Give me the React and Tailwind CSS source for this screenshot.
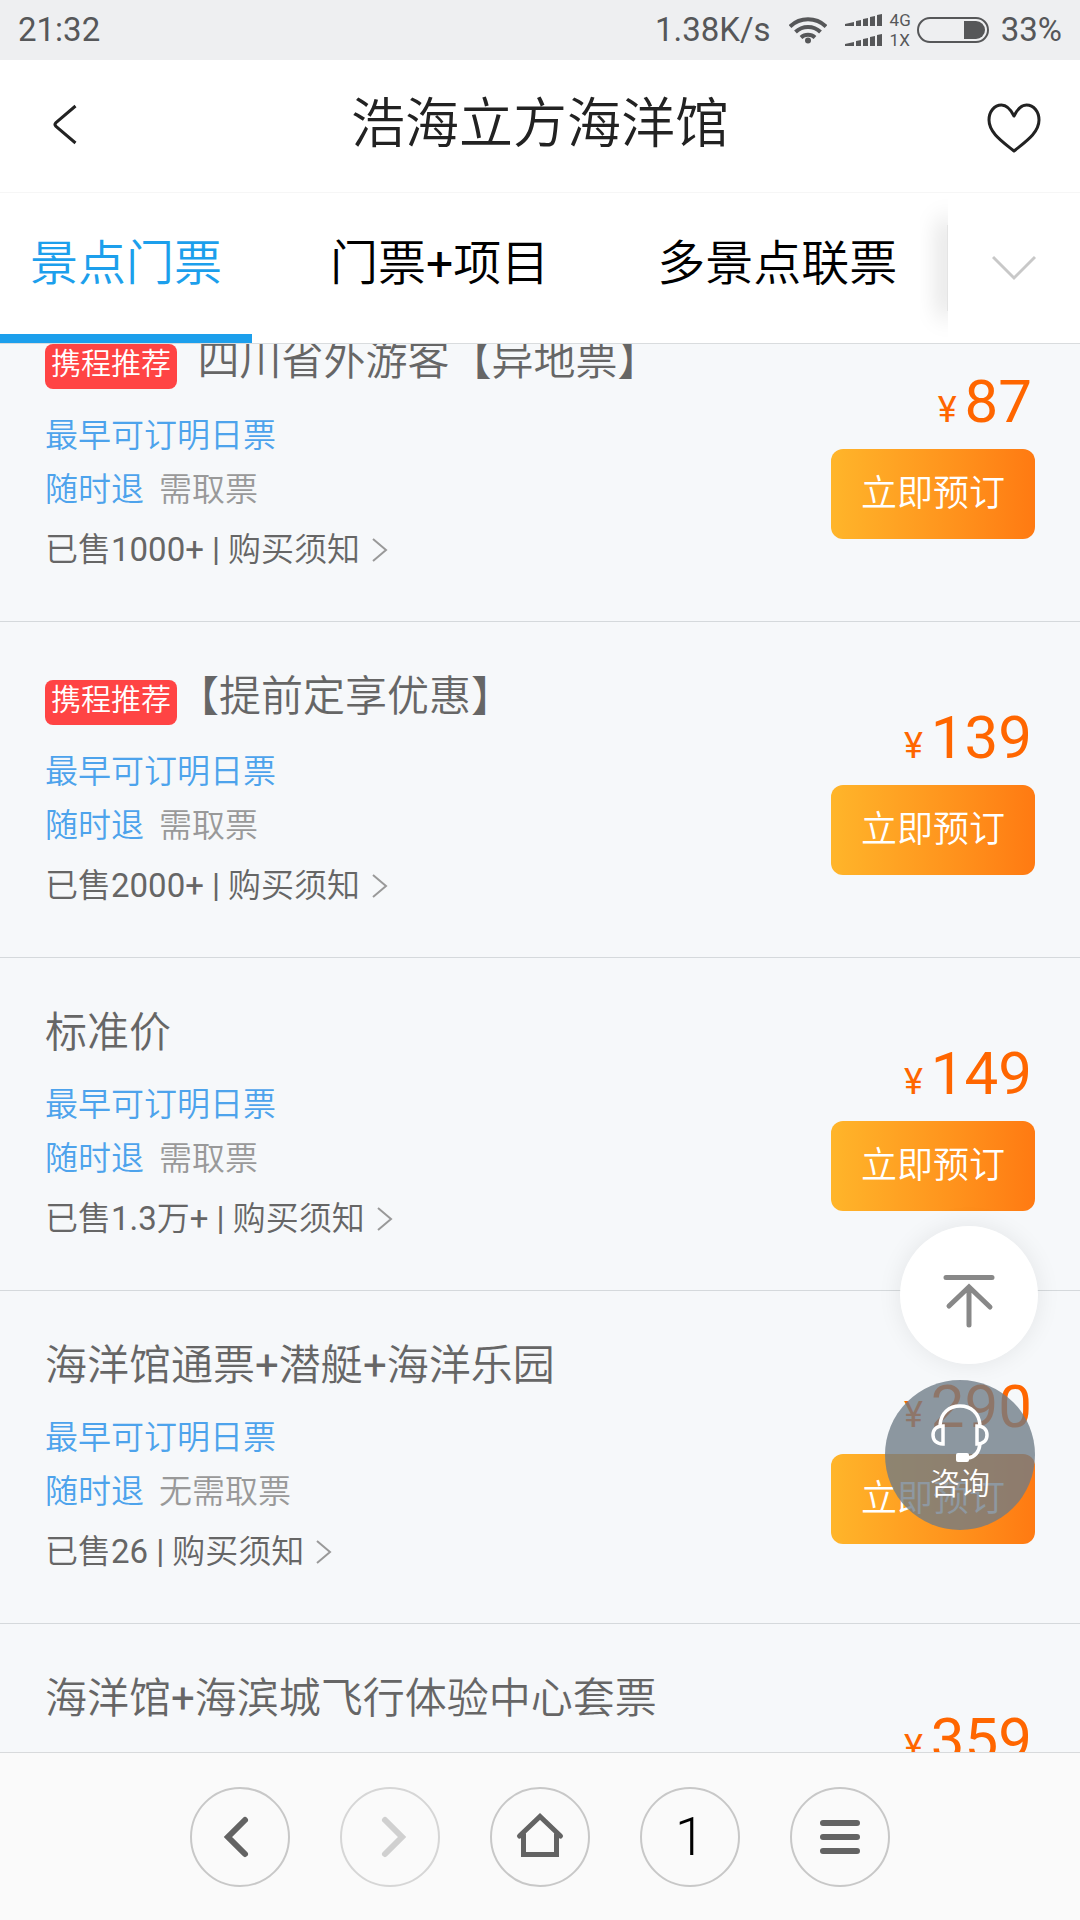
// src/App.jsx
import React, { useState } from 'react';

const tabs = ['景点门票', '门票+项目', '多景点联票'];

const tickets = [
  { id: 1, badge: '携程推荐', title: '\u00a0\u00a0四川省外游客【异地票】', pickup: '需取票', sold: '1000+', price: 87 },
  { id: 2, badge: '携程推荐', title: '【提前定享优惠】', pickup: '需取票', sold: '2000+', price: 139 },
  { id: 3, title: '标准价', pickup: '需取票', sold: '1.3万+', price: 149 },
  { id: 4, title: '海洋馆通票+潜艇+海洋乐园', pickup: '无需取票', sold: '26', price: 290 },
  { id: 5, title: '海洋馆+海滨城飞行体验中心套票', pickup: '需取票', sold: '100+', price: 359 },
];

// Latin signs and digits are drawn a step heavier than the Chinese text around them
const MixedText = ({ children }) =>
  children.split(/([\d.+|]+)/).map((part, i) =>
    i % 2 ? (
      <span key={i} className="font-normal">
        {part}
      </span>
    ) : (
      part
    )
  );

const SignalBars = () => (
  <svg width="37" height="12" viewBox="0 0 37 12" fill="currentColor">
    <path d="M0 12v-2l9-2v4zM11 12V7l5-1v6zM18 12V5l5-1v8zM25 12V3l5-1v10zM32 12V1l5-1v12z" />
  </svg>
);

const StatusBar = () => (
  <div className="flex h-[60px] flex-none items-center bg-[#eeeff1] pl-[18px] pr-[18px] text-[33px] text-[#565759]">
    <span className="mr-auto">21:32</span>
    <span className="mr-[18px]">1.38K/s</span>
    <svg className="mr-[18px]" width="38" height="28" viewBox="0 0 38 28" fill="none" stroke="currentColor" strokeWidth="4">
      <path d="M1 10.500a26 26 0 0 1 36 0" />
      <path d="M6.500 16a18 18 0 0 1 25 0" />
      <path d="M12 21.500a10.500 10.500 0 0 1 14 0" />
      <circle cx="19" cy="24.500" r="3" fill="currentColor" stroke="none" />
    </svg>
    <span className="mr-2 flex flex-col gap-2">
      <SignalBars />
      <SignalBars />
    </span>
    <span className="mr-[6px] flex flex-col text-[17px] leading-5">
      <span>4G</span>
      <span>1X</span>
    </span>
    <svg className="mr-3" width="72" height="26" viewBox="0 0 72 26">
      <rect x="1" y="1" width="70" height="24" rx="12" fill="none" stroke="currentColor" strokeWidth="2" />
      <path d="M47 4h12a9 9 0 0 1 0 18H47z" fill="currentColor" />
    </svg>
    <span>33%</span>
  </div>
);

const Header = () => (
  <header className="flex h-[132px] flex-none items-center justify-between bg-white pb-1 pl-[50px] pr-[39px] text-[#222]">
    <button type="button" aria-label="返回" className="w-[43px]">
      <svg width="28" height="42" viewBox="0 0 28 42" fill="none" stroke="currentColor" strokeWidth="3">
        <path d="M25.500 3L6 19.500Q4 21.500 6 23.500L25.500 40" />
      </svg>
    </button>
    <h1 className="text-[54px] font-[350]">浩海立方海洋馆</h1>
    <button type="button" aria-label="收藏" className="pt-2">
      <svg width="54" height="50" viewBox="0 0 54 50" fill="none" stroke="currentColor" strokeWidth="3" strokeLinejoin="round">
        <path d="M27 13C23 5 19 2 14.500 2C7 2 2 9 2 17C2 30 16 39 27 48C38 39 52 30 52 17C52 9 47 2 39.500 2C35 2 31 5 27 13Z" />
      </svg>
    </button>
  </header>
);

const TabBar = ({ active, onChange }) => (
  <div className="flex h-[152px] flex-none border-b border-t border-b-[#d9dcde] border-t-[#f6f6f6] bg-white">
    <div role="tablist" className="flex min-w-0 flex-1 gap-12 overflow-hidden whitespace-nowrap">
      {tabs.map((tab, i) => (
        <button
          key={tab}
          type="button"
          role="tab"
          aria-selected={i === active}
          onClick={() => onChange(i)}
          className={
            i === active
              ? 'border-b-[9px] border-[#1c9fec] px-[30px] text-[48px] font-[350] text-[#1c9fec]'
              : 'border-b-[9px] border-transparent px-[30px] text-[48px] font-[350] text-black'
          }
        >
          <MixedText>{tab}</MixedText>
        </button>
      ))}
    </div>
    {/* Shadow at the edge of the scrolling tabs */}
    <div className="flex w-7 flex-none justify-end overflow-hidden py-8">
      <div className="w-px bg-[#e4e4e4] shadow-[0_0_24px_6px_rgba(0,0,0,0.18)]" />
    </div>
    <button type="button" aria-label="展开" className="flex w-[132px] flex-none items-center justify-center">
      <svg width="44" height="28" viewBox="0 0 44 28" fill="none" stroke="#c8c8c8" strokeWidth="3">
        <path d="M1 3l21 21L43 3" />
      </svg>
    </button>
  </div>
);

const TicketItem = ({ ticket }) => (
  <li className="flex items-start justify-between border-b border-[#d5d9dc] px-[45px] pb-11">
    <div className="pt-[45px] text-[33px] font-[350] leading-[54px]">
      <div className={ticket.badge ? 'mb-[15px] flex h-[63px] items-end' : 'mb-[15px] h-[60px]'}>
        {ticket.badge && (
          <span className="mb-[5px] h-[45px] rounded-lg bg-[#ff4444] px-[6px] text-[30px] leading-10 text-white">
            {ticket.badge}
          </span>
        )}
        <h2 className="self-start text-[42px] leading-[60px] text-[#666]">
          <MixedText>{ticket.title}</MixedText>
        </h2>
      </div>
      <p className="text-[#4da3ec]">最早可订明日票</p>
      <p className="flex gap-[15px]">
        <span className="text-[#4da3ec]">随时退</span>
        <span className="text-[#999]">{ticket.pickup}</span>
      </p>
      <a href="#notice" className="mt-[6px] flex items-center text-[#666]">
        <span>
          <MixedText>{`已售${ticket.sold} | 购买须知`}</MixedText>
        </span>
        <svg className="ml-[11px]" width="17" height="26" viewBox="0 0 17 26" fill="none" stroke="#999" strokeWidth="2">
          <path d="M2 2l13 11L2 24" />
        </svg>
      </a>
    </div>
    <div className="flex flex-col items-end pt-[86px]">
      <p className="mb-[9px] flex items-baseline gap-2 pr-[3px] text-[60px] leading-[60px] text-[#ff6600]">
        <span className="text-[36px]">¥</span>
        {ticket.price}
      </p>
      <button
        type="button"
        className="h-[90px] w-[204px] rounded-xl bg-linear-to-r from-[#ffb52a] to-[#ff7a12] text-[36px] font-[350] text-white"
      >
        立即预订
      </button>
    </div>
  </li>
);

// Buttons that float over the list
const FloatingActions = () => (
  <div className="absolute bottom-[222px] right-[42px] flex flex-col items-end gap-4">
    <button
      type="button"
      aria-label="回到顶部"
      className="flex h-[138px] w-[138px] items-center justify-center rounded-full bg-white pt-3 shadow-[0_0_24px_rgba(0,0,0,0.08)]"
    >
      <svg width="52" height="54" viewBox="0 0 52 54" fill="none" stroke="#888" strokeWidth="5" strokeLinecap="round">
        <path d="M3 3.500h46M26 13v38M6 32l20-19 21 20" />
      </svg>
    </button>
    <button
      type="button"
      className="mr-[3px] flex h-[150px] w-[150px] flex-col items-center gap-[2px] rounded-full bg-[rgba(110,123,135,0.78)] pt-6 text-[30px] font-[350] leading-10 text-white"
    >
      <svg width="58" height="58" viewBox="0 0 58 58" fill="none" stroke="currentColor" strokeWidth="3.500">
        <path d="M9 21C10 9 18 2 29 2s19 7 20 19" />
        <path d="M12 22v18C5 40 2 36 2 31s3-9 10-9zM46 22v18c7 0 10-4 10-9s-3-9-10-9z" />
        <path d="M49 40c-1 8-5 13-12 14" />
        <rect x="25" y="49" width="13" height="9" rx="2" fill="currentColor" stroke="none" />
      </svg>
      咨询
    </button>
  </div>
);

const NavButton = ({ label, disabled, children }) => (
  <button
    type="button"
    aria-label={label}
    disabled={disabled}
    className="flex h-[100px] w-[100px] items-center justify-center rounded-full border-2 border-[#c8c8c8] text-[#636363] disabled:border-[#d6d6d6] disabled:text-[#d0d0d0]"
  >
    {children}
  </button>
);

const NavIcon = ({ d, width }) => (
  <svg className="flex-none" width="96" height="96" viewBox="2 2 96 96" fill="none" stroke="currentColor" strokeWidth={width} strokeLinecap="round">
    <path d={d} />
  </svg>
);

const BottomBar = () => (
  <nav className="flex h-[168px] flex-none items-center justify-center gap-[50px] border-t border-[#d8dadc] bg-[#fafafa]">
    <NavButton label="后退">
      <NavIcon width="6" d="M55 33L38 50l17 17" />
    </NavButton>
    <NavButton label="前进" disabled>
      <NavIcon width="6" d="M45 33l17 17-17 17" />
    </NavButton>
    <NavButton label="主页">
      <NavIcon width="5" d="M29.500 49L50 29.500 70.500 49M33.500 47v20.500h33V47" />
    </NavButton>
    <NavButton label="窗口">
      <span className="text-[54px] font-light leading-none text-black">1</span>
    </NavButton>
    <NavButton label="菜单">
      <NavIcon width="6" d="M33 36h34M33 50h34M33 64h34" />
    </NavButton>
  </nav>
);

const App = () => {
  const [activeTab, setActiveTab] = useState(0);

  return (
    <div className="flex h-screen flex-col bg-[#f6f8fa] font-['Roboto','Noto_Sans_CJK_SC',sans-serif]">
      <StatusBar />
      <Header />
      <TabBar active={activeTab} onChange={setActiveTab} />
      <main className="relative min-h-0 flex-1 overflow-hidden">
        {/* List is scrolled part way past the first ticket */}
        <ul className="-mt-[58px]">
          {tickets.map((ticket) => (
            <TicketItem key={ticket.id} ticket={ticket} />
          ))}
        </ul>
        <FloatingActions />
      </main>
      <BottomBar />
    </div>
  );
};

export default App;
